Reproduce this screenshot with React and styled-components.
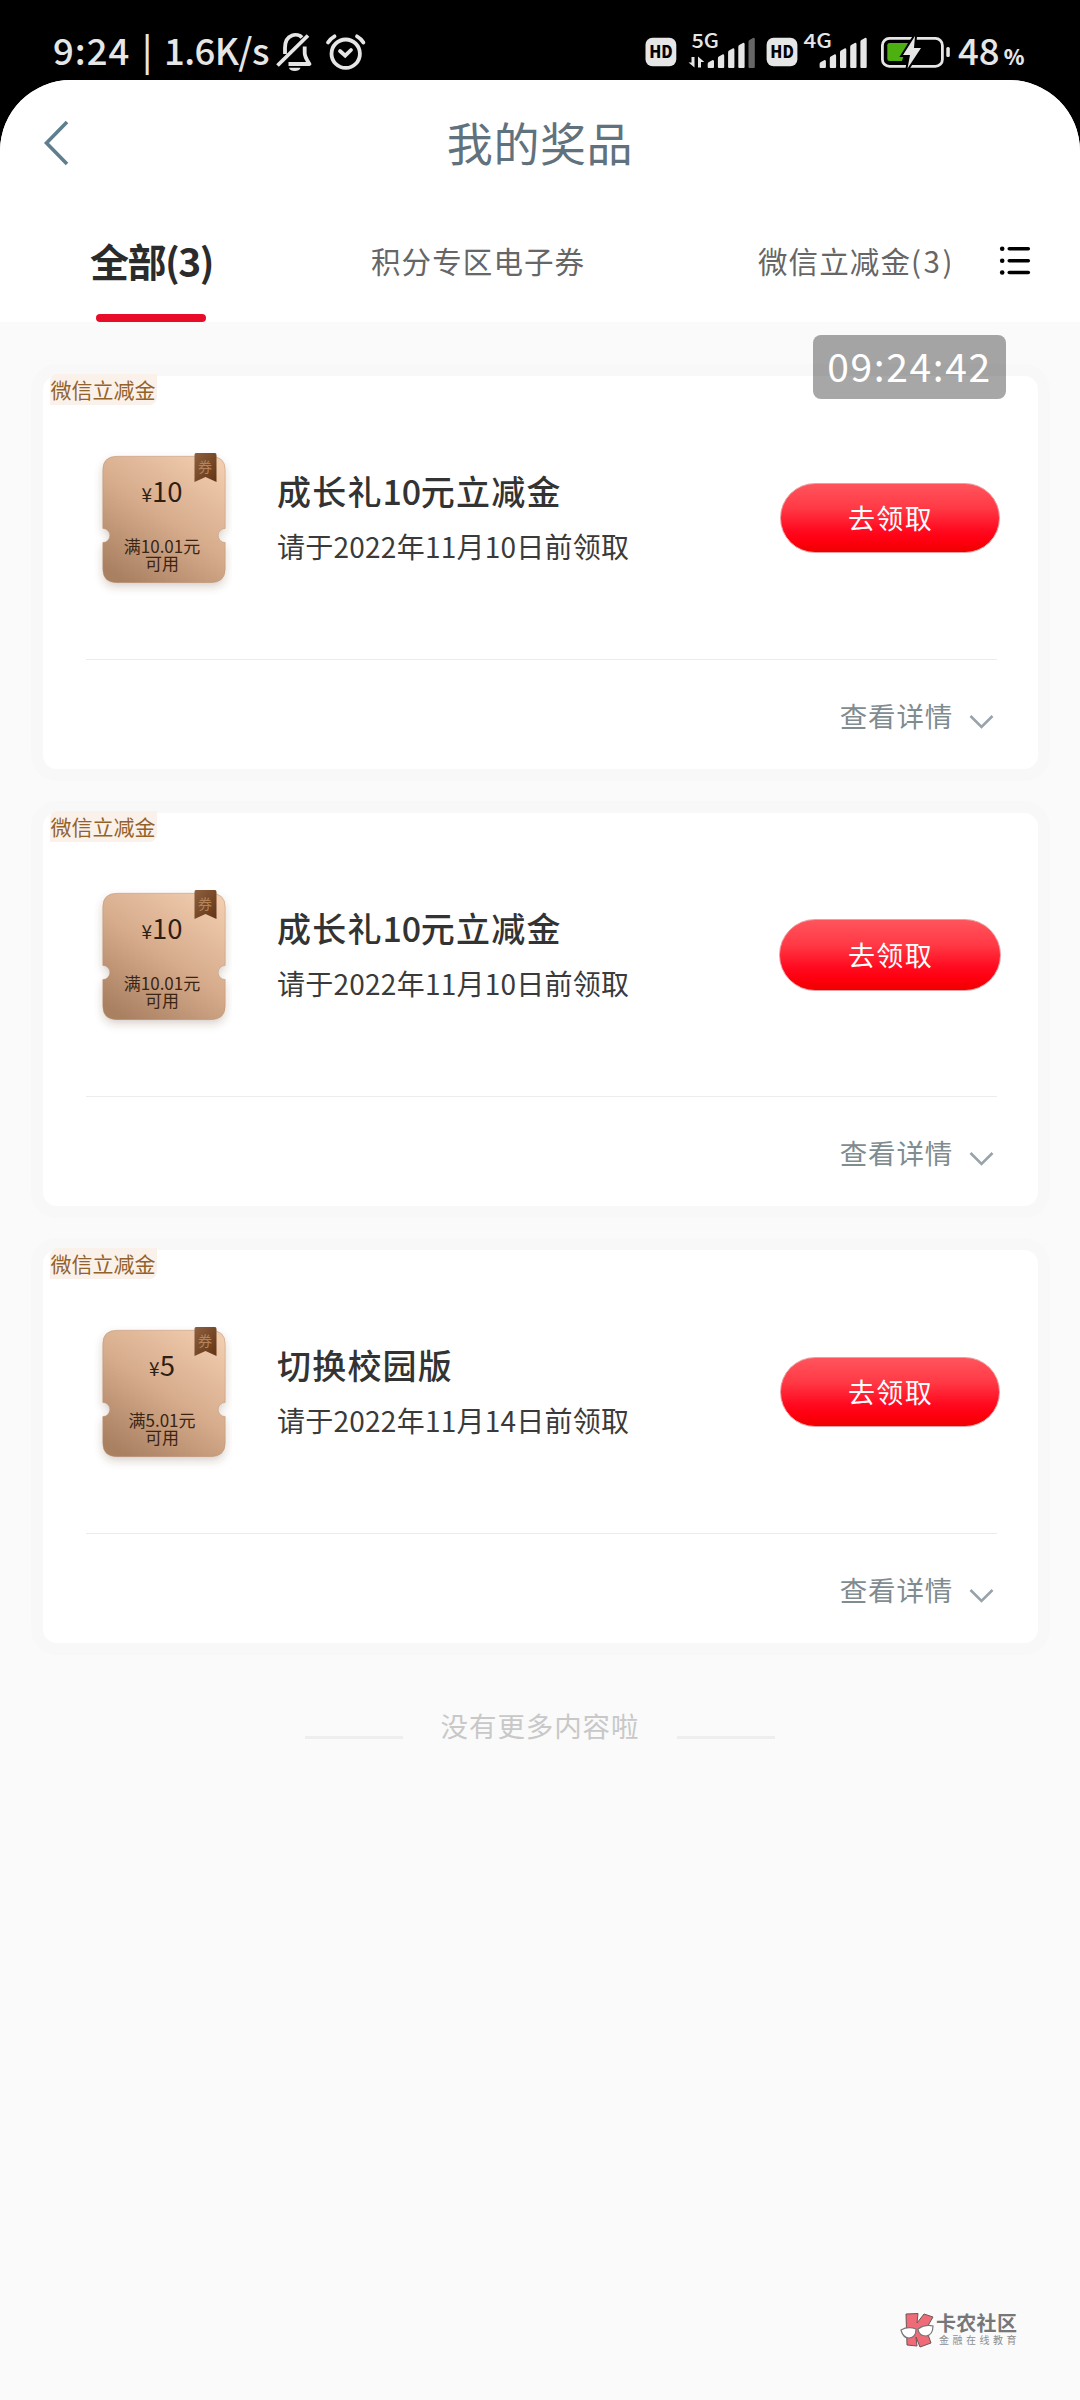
import React from "react";
import styled, { createGlobalStyle, css } from "styled-components";

const Global = createGlobalStyle`
  * { box-sizing: border-box; }
  body { margin: 0; background: #000; }
`;

const cjk = `"Noto Sans CJK SC", sans-serif`;

const Phone = styled.div`
  width: 1080px;
  height: 2400px;
  background: #000;
  font-family: ${cjk};
  display: flex;
  flex-direction: column;
  position: relative;
  overflow: hidden;
`;

const StatusBar = styled.header`
  height: 80px;
  flex: none;
  padding: 26px 56px 0 53px;
  display: flex;
  justify-content: space-between;
  color: #e6e6e6;
`;

const StatusSide = styled.div`
  display: flex;
  height: 54px;
`;

const StatusText = styled.span`
  font-weight: 500;
  font-size: 36.5px;
  line-height: 48px;
  white-space: pre;
  width: ${(p) => p.$w}px;
  letter-spacing: ${(p) => p.$ls || 0}px;
`;

const Percent = styled.span`
  font-size: 21px;
  font-weight: 900;
  letter-spacing: 0;
  margin-left: 4px;
`;

const StatusIcons = styled.svg`
  flex: none;
  display: block;
`;

const Screen = styled.main`
  flex: 1;
  background: #fafafa;
  border-radius: 71px 71px 0 0;
  overflow: hidden;
`;

const Top = styled.div`
  background: #fff;
  height: 242px;
`;

const NavBar = styled.div`
  height: 128px;
  display: grid;
  grid-template-columns: 120px 1fr 120px;
  align-items: center;
`;

const BackIcon = styled.svg`
  display: block;
  margin: -2px 0 0 40px;
`;

const Title = styled.h1`
  margin: -6px 0 0;
  text-align: center;
  font-weight: 400;
  font-size: 46px;
  line-height: 60px;
  letter-spacing: 0.6px;
  color: #5f727e;
`;

const TabRow = styled.div`
  height: 114px;
  display: flex;
`;

const Tabs = styled.div`
  width: 950px;
  display: flex;
  overflow: hidden;
`;

const Tab = styled.div`
  flex: none;
  height: 114px;
  width: ${(p) => p.$w}px;
  padding-left: ${(p) => p.$pad}px;
  padding-top: 22px;
  white-space: nowrap;
  font-size: 29.5px;
  line-height: 60px;
  letter-spacing: 1.1px;
  color: #666;
  ${(p) =>
    p.$active &&
    css`
      font-size: 39px;
      font-weight: 700;
      letter-spacing: -1.5px;
      color: #2b2b2b;
    `}
`;

const Count = styled.span`
  letter-spacing: 2.6px;
`;

const Underline = styled.div`
  width: 110px;
  height: 8px;
  border-radius: 4px;
  background: #e90c28;
  margin: 24px 0 0 6px;
`;

const ListIcon = styled.svg`
  margin: 34px 0 0 47px;
  flex: none;
`;

const Clock = styled.div`
  position: absolute;
  left: 813px;
  top: 335px;
  width: 193px;
  height: 64px;
  border-radius: 8px;
  background: rgba(0, 0, 0, 0.345);
  color: #fff;
  font-size: 39px;
  line-height: 60px;
  letter-spacing: 1.6px;
  text-align: center;
`;

const Cards = styled.section`
  padding: 54px 42px 0 43px;
  display: flex;
  flex-direction: column;
  gap: 44px;
`;

const Card = styled.article`
  height: 393px;
  border-radius: 14px;
  background: #fff;
  box-shadow: 0 0 0 12px #f8f8f8;
  padding: 0 41px 0 43px;
`;

const Tag = styled.div`
  width: 107px;
  height: 31px;
  margin: -2px 0 0 -36px;
  padding-right: 1px;
  border-radius: 8px 0 8px 0;
  background: #faf1ea;
  color: #93622a;
  font-size: 21px;
  line-height: 30px;
  text-align: center;
  white-space: nowrap;
`;

const CardBody = styled.div`
  height: 254px;
  display: flex;
  padding-top: 43px;
`;

const Ticket = styled.div`
  position: relative;
  width: 144px;
  height: 150px;
  flex: none;
`;

const TicketArt = styled.svg`
  position: absolute;
  left: 0;
  top: 0;
`;

const TicketText = styled.div`
  position: relative;
  width: 122px;
  margin: 25px 0 0 15px;
  text-align: center;
  color: #2e1f14;
  line-height: 34px;
  font-size: 27.5px;
  small {
    font-size: 19px;
  }
`;

const TicketRule = styled.div`
  position: relative;
  width: 122px;
  margin: 26px 0 0 15px;
  text-align: center;
  color: #3a2413;
  font-size: 17px;
  line-height: 17px;
`;

const Ribbon = styled.span`
  position: absolute;
  left: 108px;
  top: 8px;
  width: 22px;
  text-align: center;
  font-size: 14px;
  line-height: 20px;
  color: #b5835a;
`;

const Info = styled.div`
  padding: 18px 0 0 47px;
  flex: 1;
`;

const Name = styled.div`
  font-size: 34px;
  line-height: 50px;
  font-weight: 500;
  letter-spacing: 1.2px;
  color: #333;
`;

const Digits = styled.span`
  letter-spacing: -0.3px;
`;

const Expire = styled.div`
  margin-top: 5px;
  font-size: 28px;
  line-height: 50px;
  letter-spacing: 0.25px;
  color: #3a3a3a;
`;

const ClaimButton = styled.button`
  margin: ${(p) => (p.$raised ? "34px -4px 0 0" : "35px -3px 0 0")};
  width: ${(p) => (p.$raised ? 222 : 220)}px;
  height: ${(p) => (p.$raised ? 72 : 70)}px;
  padding: 0 0 1px 1px;
  border: 1px solid #e9a0a3;
  border-radius: 36px;
  background: linear-gradient(#ff545c 0%, #ff3a46 35%, #ff0a20 68%, #ff0010 82%, #f00000 100%);
  color: #fff;
  font-family: ${cjk};
  font-size: 27px;
  letter-spacing: 1.3px;
`;

const Details = styled.div`
  height: 108px;
  border-top: 1px solid #ececec;
  display: flex;
  justify-content: flex-end;
  align-items: center;
  padding: 3px 3px 0 0;
  color: #7f8c90;
  font-size: 27.5px;
  letter-spacing: 0.8px;
  svg {
    margin: 13px 0 0 16px;
  }
`;

const EndNote = styled.footer`
  margin-top: 57px;
  height: 50px;
  display: flex;
  justify-content: center;
  align-items: center;
  gap: 38px;
  font-size: 27.5px;
  line-height: 50px;
  letter-spacing: 0.9px;
  color: #c8c8c8;
`;

const EndLine = styled.i`
  width: 98px;
  height: 3px;
  margin-top: 24px;
  background: #eee;
`;

const Watermark = styled.div`
  position: absolute;
  left: 900px;
  top: 2311px;
  display: flex;
  gap: 2px;
`;

const MarkText = styled.div`
  white-space: nowrap;
  b {
    display: block;
    font-size: 20px;
    line-height: 23px;
    letter-spacing: 0.3px;
    font-weight: 700;
    color: #77777a;
  }
  span {
    display: block;
    padding-left: 3px;
    font-size: 10px;
    line-height: 11px;
    letter-spacing: 3.5px;
    color: #8e8e8e;
  }
`;

const prizes = [
  { amount: "10", rule: "满10.01元", name: "成长礼10元立减金", expire: "请于2022年11月10日前领取" },
  { amount: "10", rule: "满10.01元", name: "成长礼10元立减金", expire: "请于2022年11月10日前领取", raised: true },
  { amount: "5", rule: "满5.01元", name: "切换校园版", expire: "请于2022年11月14日前领取" },
];

function Bars({ x, dimLast }) {
  const tops = [34, 28.3, 22.3, 16.7, 11.7];
  return tops.map((t, i) => {
    const l = x + i * 10.2;
    return (
      <path
        key={i}
        d={`M${l} ${t + 4} Q${l} ${t + 2.6} ${l + 1.4} ${t + 2} L${l + 5} ${t} Q${l + 6.3} ${t} ${l + 6.3} ${t + 1.4} V41 Q${l + 6.3} 42 ${l + 5.3} 42 H${l + 1} Q${l} 42 ${l} 41 Z`}
        fill={dimLast && i === 4 ? "#666" : "#e6e6e6"}
      />
    );
  });
}

function LeftIcons() {
  return (
    <StatusIcons width="96" height="54" viewBox="272 26 96 54" fill="none" stroke="#e6e6e6" strokeWidth="3.8">
      <path d="M285 54V48C285 33 298 33 302 37.5" />
      <path d="M304.700 46.500V53C304.700 57 307 60 309.500 64H288.500" strokeLinejoin="round" />
      <path d="M277.500 65.500L308 35.500" />
      <path d="M289 67.700h11.500c-1 4.300-10.500 4.300-11.500 0z" fill="#e6e6e6" stroke="none" />
      <circle cx="345.700" cy="53.700" r="14.200" />
      <path d="M340 51L345.200 55.700L351 50" strokeLinecap="round" />
      <path d="M328 42.500Q330.500 38.500 334.500 36.300M363.400 42.500Q361 38.500 357 36.300" strokeLinecap="round" />
    </StatusIcons>
  );
}

const IconLabel = styled.text`
  font-family: ${cjk};
  font-size: ${(p) => p.$size}px;
  font-weight: ${(p) => p.$weight};
`;

function RightIcons() {
  return (
    <StatusIcons width="314" height="54" viewBox="644 0 314 54">
      {[645.5, 766.6].map((x) => (
        <g key={x}>
          <rect x={x} y="11.700" width="30.800" height="28.600" rx="7" fill="#e6e6e6" />
          <IconLabel $size={16.5} $weight={900} x={x + 3.7} y="32" fill="#000" textLength="23.500" lengthAdjust="spacingAndGlyphs">
            HD
          </IconLabel>
        </g>
      ))}
      <IconLabel $size={19.5} $weight={500} x="691.500" y="22" fill="#e6e6e6" textLength="27.500" lengthAdjust="spacingAndGlyphs">
        5G
      </IconLabel>
      <IconLabel $size={19.5} $weight={500} x="803.500" y="22" fill="#e6e6e6" textLength="28.500" lengthAdjust="spacingAndGlyphs">
        4G
      </IconLabel>
      <path d="M691.500 31H694.500V41.500L688.500 36.500H691.500ZM698 41.500H701V36H704.300L698 30.500Z" fill="#e6e6e6" />
      <Bars x={707.7} dimLast />
      <Bars x={819.6} />
      <rect x="882.400" y="12.400" width="60" height="28" rx="7" fill="none" stroke="#e6e6e6" strokeWidth="2.800" />
      <rect x="946.300" y="21" width="3.500" height="10" rx="1.500" fill="#e6e6e6" />
      <path d="M889.500 17H908L902 35H889.500Q887.300 35 887.300 32.800V19.200Q887.300 17 889.500 17Z" fill="#4cb010" />
      <path
        d="M915 10L903 29H910L907.500 42.500L921 22H914Z"
        fill="#e6e6e6"
        stroke="#000"
        strokeWidth="4"
        paintOrder="stroke"
      />
    </StatusIcons>
  );
}

function TicketShape({ id }) {
  return (
    <TicketArt width="146" height="150" viewBox="0 0 146 150">
      <defs>
        <linearGradient id={`t${id}`} x1="0.85" y1="0" x2="0.2" y2="1">
          <stop offset="0" stopColor="#f1ccae" />
          <stop offset="0.5" stopColor="#d6ac8c" />
          <stop offset="1" stopColor="#a98061" />
        </linearGradient>
        <linearGradient id={`r${id}`} x1="0" y1="0" x2="1" y2="1">
          <stop offset="0" stopColor="#8d603f" />
          <stop offset="1" stopColor="#623413" />
        </linearGradient>
        <filter id={`s${id}`} x="-20%" y="-20%" width="140%" height="140%">
          <feDropShadow dx="0" dy="4" stdDeviation="4" floodColor="#5a3a20" floodOpacity="0.22" />
        </filter>
      </defs>
      <path
        filter={`url(#s${id})`}
        fill={`url(#t${id})`}
        stroke="#b98f70"
        strokeOpacity="0.6"
        strokeWidth="0.8"
        d="M31 8.300H124.500Q139.200 8.300 139.200 22V80.500A6.800 6.800 0 0 0 139.200 94.500V121Q139.200 134.700 124.500 134.700H31Q16.800 134.700 16.800 121V94.500A6.800 6.800 0 0 0 16.800 80.500V22Q16.800 8.300 31 8.300Z"
      />
      <path fill={`url(#r${id})`} d="M110 5H129Q130.500 5 130.500 7V34L119.500 29L108.500 34V7Q108.500 5 110 5Z" />
    </TicketArt>
  );
}

function PrizeName({ text }) {
  return (
    <Name>
      {text.split(/(\d+)/).map((part, i) => (i % 2 ? <Digits key={i}>{part}</Digits> : part))}
    </Name>
  );
}

function PrizeCard({ prize, id }) {
  return (
    <Card>
      <Tag>微信立减金</Tag>
      <CardBody>
        <Ticket>
          <TicketShape id={id} />
          <Ribbon>券</Ribbon>
          <TicketText>
            <small>¥</small>
            {prize.amount}
          </TicketText>
          <TicketRule>
            {prize.rule}
            <br />
            可用
          </TicketRule>
        </Ticket>
        <Info>
          <PrizeName text={prize.name} />
          <Expire>{prize.expire}</Expire>
        </Info>
        <ClaimButton $raised={prize.raised}>去领取</ClaimButton>
      </CardBody>
      <Details>
        查看详情
        <svg width="25" height="16" viewBox="0 0 25 16" fill="none" stroke="#98a3aa" strokeWidth="2.600">
          <path d="M1.500 2L12.500 13L23.500 2" />
        </svg>
      </Details>
    </Card>
  );
}

export default function App() {
  return (
    <Phone>
      <Global />
      <StatusBar>
        <StatusSide>
          <StatusText $w={89} $ls={1}>9:24</StatusText>
          <StatusText $w={22}>|</StatusText>
          <StatusText $w={108} $ls={-0.6}>1.6K/s</StatusText>
          <LeftIcons />
        </StatusSide>
        <StatusSide>
          <RightIcons />
          <StatusText $w={66}>
            48<Percent>%</Percent>
          </StatusText>
        </StatusSide>
      </StatusBar>
      <Screen>
        <Top>
          <NavBar>
            <BackIcon width="32" height="48" viewBox="40 120 32 48" fill="none" stroke="#5f7f8f" strokeWidth="3.600">
              <path d="M67 123L46.500 144L67 165" />
            </BackIcon>
            <Title>我的奖品</Title>
          </NavBar>
          <TabRow>
            <Tabs>
              <Tab $w={281} $pad={90} $active>
                全部(3)
                <Underline />
              </Tab>
              <Tab $w={400} $pad={90}>积分专区电子券</Tab>
              <Tab $w={300} $pad={77}>
                微信立减金<Count>(3)</Count>
              </Tab>
            </Tabs>
            <ListIcon width="36" height="36" viewBox="997 242 36 36" stroke="#000" strokeWidth="3.600" strokeLinecap="round">
              {[248.7, 260.7, 272.5].map((y) => (
                <g key={y}>
                  <path d={`M1009.300 ${y}H1028.300`} />
                  <circle cx="1002.200" cy={y} r="2.300" stroke="none" />
                </g>
              ))}
            </ListIcon>
          </TabRow>
        </Top>
        <Cards>
          {prizes.map((p, i) => (
            <PrizeCard key={i} id={i} prize={p} />
          ))}
        </Cards>
        <EndNote>
          <EndLine />
          没有更多内容啦
          <EndLine />
        </EndNote>
      </Screen>
      <Clock>09:24:42</Clock>
      <Watermark>
        <svg width="34" height="38" viewBox="900 2311 34 38">
          <path d="M906 2314L918 2313.500L917 2323L924 2314L933 2317L926 2329L931 2343L920 2347L916 2337L917 2346L907 2345Z" fill="#ef6b78" stroke="#6c5658" strokeWidth="1" />
          <path d="M901 2330Q908 2326 916 2329Q916 2338 909 2338Q903 2338 901 2330ZM918 2329Q925 2324 933 2326Q933 2335 926 2336Q919 2336 918 2329Z" fill="#fff" stroke="#777" strokeWidth="1.200" />
        </svg>
        <MarkText>
          <b>卡农社区</b>
          <span>金融在线教育</span>
        </MarkText>
      </Watermark>
    </Phone>
  );
}
